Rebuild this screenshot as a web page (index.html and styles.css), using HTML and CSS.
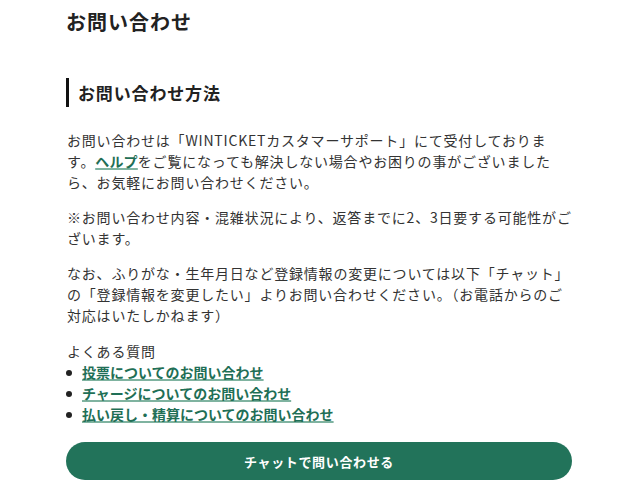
FILE: index.html
```html
<!DOCTYPE html>
<html lang="ja">
<head>
<meta charset="utf-8">
<title>お問い合わせ</title>
<link rel="stylesheet" href="styles.css">
</head>
<body>
<main class="page">
  <h1 class="title">お問い合わせ</h1>
  <section class="section">
    <h2 class="section-heading">お問い合わせ方法</h2>
    <p class="text">お問い合わせは「WINTICKETカスタマーサポート」にて受付しております。<a class="link" href="#">ヘルプ</a>をご覧になっても解決しない場合やお困りの事がございましたら、お気軽にお問い合わせください。</p>
    <p class="text">※お問い合わせ内容・混雑状況により、返答までに2、3日要する可能性がございます。</p>
    <p class="text">なお、ふりがな・生年月日など登録情報の変更については以下「チャット」の「登録情報を変更したい」よりお問い合わせください。（お電話からのご対応はいたしかねます）</p>
    <div class="faq">
      <p class="faq-title">よくある質問</p>
      <ul class="faq-list">
        <li class="faq-item"><a class="link" href="#">投票についてのお問い合わせ</a></li>
        <li class="faq-item"><a class="link" href="#">チャージについてのお問い合わせ</a></li>
        <li class="faq-item"><a class="link" href="#">払い戻し・精算についてのお問い合わせ</a></li>
      </ul>
    </div>
    <button class="chat-button" type="button">チャットで問い合わせる</button>
  </section>
</main>
</body>
</html>
```

FILE: styles.css
```css
html, body {
  margin: 0;
  padding: 0;
  background: #ffffff;
}

body {
  font-family: "Noto Sans CJK JP", "Noto Sans", sans-serif;
  color: #333333;
}

.page {
  width: 506px;
  margin-left: 66px;
  padding-top: 7px;
}

.title {
  margin: 0;
  font-size: 20px;
  line-height: 30px;
  font-weight: 700;
  letter-spacing: 0.05em;
  color: #222222;
}

.section {
  margin-top: 41px;
}

.section-heading {
  margin: 0 0 23px;
  border-left: 3px solid #111111;
  padding-left: 9px;
  font-size: 17px;
  line-height: 29px;
  font-weight: 700;
  letter-spacing: 0.05em;
  color: #222222;
}

.text {
  margin: 0 0 14px;
  font-size: 14px;
  line-height: 21px;
  letter-spacing: 0.8px;
  padding-left: 1px;
}

.link {
  color: #1f6f56;
  font-weight: 700;
  letter-spacing: 0.2px;
  text-decoration: underline;
  text-decoration-color: #7fb3a0;
  text-decoration-thickness: 2px;
  text-underline-offset: 1px;
}

.faq {
  margin-top: 15px;
}

.faq-title {
  margin: 0;
  font-size: 14px;
  line-height: 21px;
  letter-spacing: 0.8px;
  padding-left: 1px;
}

.faq-list {
  list-style: none;
  margin: 0;
  padding: 0;
}

.faq-item {
  display: flex;
  align-items: center;
  gap: 10px;
  font-size: 14px;
  line-height: 21px;
}

.faq-item .link {
  letter-spacing: 0;
}

.faq-item::before {
  content: "";
  width: 6px;
  height: 6px;
  border-radius: 50%;
  background: #222222;
  flex: none;
}

.chat-button {
  display: block;
  width: 506px;
  height: 38px;
  margin-top: 17px;
  border: none;
  border-radius: 19px;
  background: #22735a;
  color: #ffffff;
  font-family: "Noto Sans CJK JP", "Noto Sans", sans-serif;
  font-size: 13px;
  font-weight: 700;
  letter-spacing: 0.05em;
  cursor: pointer;
}
```
